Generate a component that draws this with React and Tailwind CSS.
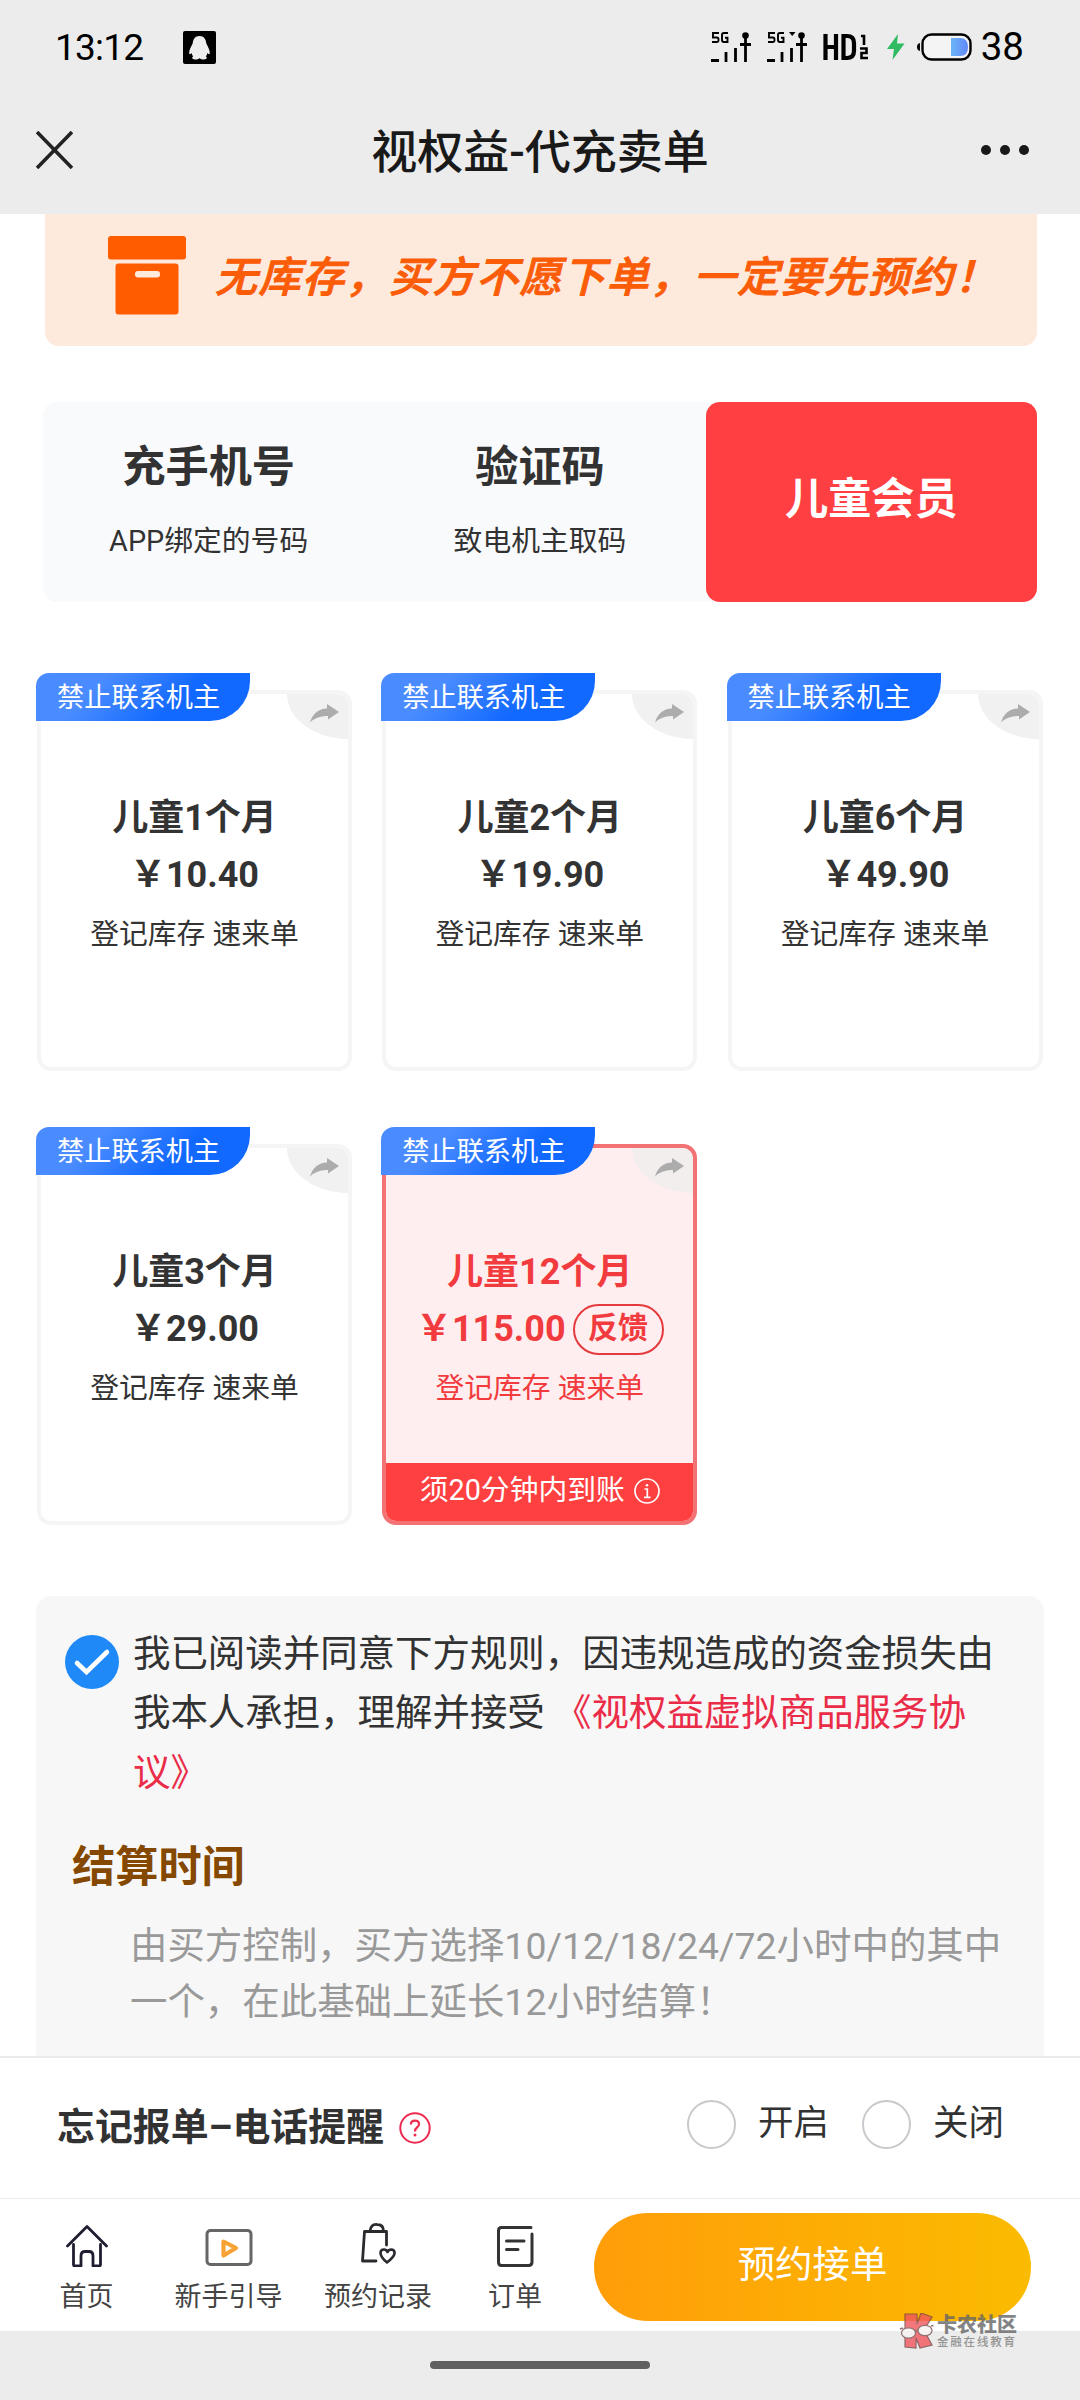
const FONT = "font-[Roboto,'Noto_Sans_CJK_SC',sans-serif]";

function StatusBar() {
  return (
    <div className="flex h-[94px] items-center pl-[55px] pr-[56px] text-black">
      <span className="text-[37px] leading-none tracking-[-0.8px]">13:12</span>
      <svg className="ml-[40px]" width="33" height="33" viewBox="0 0 33 33">
        <rect width="33" height="33" rx="2" fill="#000" />
        <path d="M16.5 5C12 5 10 8.500 9.800 12C9 14.500 6 18.500 6.200 22.500C7 24 8 22.500 8.600 22C8.800 23.500 9.500 24.700 10.200 25.300C8.500 26.500 9 28.500 12 28.500C14 28.500 15.500 28 16.500 27.200C17.500 28 19 28.500 21 28.500C24 28.500 24.500 26.500 22.800 25.300C23.500 24.700 24.200 23.500 24.400 22C25 22.500 26 24 26.800 22.500C27 18.500 24 14.500 23.200 12C23 8.500 21 5 16.500 5Z" fill="#eee" />
      </svg>
      <div className="ml-auto flex items-center">
        <Signal />
        <div className="w-[16px]" />
        <Signal marker />
        <svg className="ml-[16px]" width="46" height="28" viewBox="0 0 46 28" fill="none" stroke="#000" strokeWidth="4.200">
          <path d="M2.500 1V27M13 1V27M2 14H13M20.500 3H24Q31 3 31 10V18Q31 25 24 25H20.500Z" />
          <path d="M38 3H41V12M37 15.500H43.500V20H38.500V25H45" strokeWidth="2.600" />
        </svg>
        <svg className="ml-[17px]" width="19" height="26" viewBox="0 0 19 26">
          <path d="M12 0L1 15H8L6.500 26L18.500 9.500H11Z" fill="#2fbb62" />
        </svg>
        <svg className="ml-[12px]" width="56" height="28" viewBox="0 0 56 28">
          <defs>
            <linearGradient id="charge" x1="0" x2="1" y1="0" y2="0">
              <stop offset="0" stopColor="#6bb5f8" />
              <stop offset="1" stopColor="#6287f7" />
            </linearGradient>
          </defs>
          <path d="M3 10Q0 10.500 0 14Q0 17.500 3 18Z" />
          <rect x="5.500" y="1.500" width="48" height="25" rx="9" fill="#f4f4f4" stroke="#000" strokeWidth="2.400" />
          <path d="M34 5H43Q51 5 51 14Q51 23 43 23H34Z" fill="url(#charge)" />
        </svg>
        <span className="ml-[8px] text-[38.500px] leading-none">38</span>
      </div>
    </div>
  );
}

function Signal({ marker = false }) {
  return (
    <svg width="40" height="32" viewBox="0 0 40 32" fill="none" stroke="#000" strokeWidth="2.200">
      <path d="M8 2H2V6.500H6Q7.500 6.500 7.500 8.500V9.500Q7.500 11 6 11H1M17 2H13Q11 2 11 4V9Q11 11 13 11H16.500V6.800H14" strokeWidth="1.900" />
      <path d="M0 29.500H8M15 21V31M24.500 17V31M34.500 5V31M29 13.500H40" strokeWidth="2.800" />
      <circle cx="34.500" cy="4.500" r="3.300" fill="#000" stroke="none" />
      {marker && <path d="M22 1H28.500L25.200 5Z" fill="#000" stroke="none" />}
    </svg>
  );
}

function Header() {
  return (
    <div className="relative flex h-[120px] items-center justify-between pl-[36px] pr-[51px]">
      <svg className="-mt-[9px]" width="37" height="38" viewBox="0 0 37 38" fill="none" stroke="#222" strokeWidth="3.600">
        <path d="M1 1L36 37M36 1L1 37" />
      </svg>
      <h1 className="absolute inset-x-0 top-[25px] text-center text-[46px] font-medium leading-[66px] text-[#191919]">
        视权益-代充卖单
      </h1>
      <div className="-mt-[9px] flex gap-[9px]">
        <i className="size-[10px] rounded-full bg-[#191919]" />
        <i className="size-[10px] rounded-full bg-[#191919]" />
        <i className="size-[10px] rounded-full bg-[#191919]" />
      </div>
    </div>
  );
}

function Banner() {
  return (
    <div className="ml-[45px] mr-[43px] flex h-[132px] items-center rounded-b-[14px] bg-[#fee9dd] pl-[63px]">
      <svg className="-mt-[9px] shrink-0" width="78" height="79" viewBox="0 0 78 79">
        <rect width="78" height="23.500" rx="3" fill="#ff5c00" />
        <rect x="7.500" y="27.500" width="63" height="51" rx="3" fill="#ff5c00" />
        <rect x="27" y="35" width="25" height="6.500" rx="3" fill="#fee9dd" />
      </svg>
      <span className="-mt-[5px] ml-[29px] whitespace-nowrap text-[42px] font-medium italic leading-none tracking-[1.500px] text-[#fb5c08] [-webkit-text-stroke:1px_#fb5c08]">
        无库存，买方不愿下单，一定要先预约！
      </span>
    </div>
  );
}

function Tabs() {
  return (
    <div className="ml-[43px] mr-[43px] mt-[56px] grid h-[200px] grid-cols-3 rounded-[14px] bg-[#f9fafc] text-center text-[#323233]">
      <div className="pt-[33px]">
        <div className="text-[43.200px] font-bold leading-[66px]">充手机号</div>
        <div className="mt-[18px] text-[28.800px] leading-[44px]">APP绑定的号码</div>
      </div>
      <div className="pt-[33px]">
        <div className="text-[43.200px] font-bold leading-[66px]">验证码</div>
        <div className="mt-[18px] text-[28.800px] leading-[44px]">致电机主取码</div>
      </div>
      <div className="flex items-center justify-center rounded-[14px] bg-[#ff3f41] pb-[3px] text-[43.200px] font-bold text-white">
        儿童会员
      </div>
    </div>
  );
}

function ShareCorner({ selected }) {
  return (
    <div className={`absolute right-0 top-0 h-[45px] w-[61px] rounded-bl-[100%] rounded-tr-[10px] ${selected ? "bg-[#f3eeee]" : "bg-[#f1f1f1]"}`}>
      <svg className="absolute left-[23px] top-[10px]" width="29" height="19" viewBox="0 0 29 19">
        <path d="M17 0L29 8L18 15.500V12Q7 11.500 0 18.500Q4 5 17 4.500Z" fill="#acacac" />
      </svg>
    </div>
  );
}

function Card({ title, price, selected = false }) {
  return (
    <div className="relative h-[398px] pt-[17px]">
      <div
        className={`relative mx-[1px] h-[381px] overflow-hidden rounded-[14px] border-4 text-center ${
          selected ? "border-[#f37375] bg-[#ffeeef] text-[#f23b3e]" : "border-[#f5f5f5] bg-white text-[#333]"
        }`}
      >
        <ShareCorner selected={selected} />
        <div className="mt-[97px] text-[36px] font-bold leading-[54px]">{title}</div>
        <div className="flex h-[60px] items-center justify-center">
          <span className="whitespace-nowrap text-[36px] font-bold leading-[54px]">￥{price}</span>
          {selected && (
            <span className="ml-[7px] h-[51px] w-[91px] shrink-0 rounded-full border-2 border-[#e53a3d] text-[30px] font-bold leading-[44px]">
              反馈
            </span>
          )}
        </div>
        <div className="mt-[6px] text-[28.800px] leading-[46px]">登记库存 速来单</div>
        {selected && (
          <div className="mt-[52px] flex h-[60px] items-center justify-center gap-[9px] bg-[#ff4040] pb-[5px] text-[28.800px] leading-none text-white">
            <span>须20分钟内到账</span>
            <svg width="26" height="26" viewBox="0 0 26 26" fill="none" stroke="#fff" strokeWidth="1.700">
              <circle cx="13" cy="13" r="12" />
              <path d="M10.500 11H13.300V19M10 19.300H16.500" />
              <circle cx="13" cy="7.300" r="1.300" fill="#fff" stroke="none" />
            </svg>
          </div>
        )}
      </div>
      <div className="absolute left-0 top-0 h-[48px] w-[214px] rounded-br-[40px] rounded-tl-[13px] bg-linear-[135deg,#4a8cff_0%,#4a8cff_28%,#1269ff_65%] pl-[21px] text-[27.200px] leading-[50px] text-white">
        禁止联系机主
      </div>
    </div>
  );
}

const CARDS = [
  { title: "儿童1个月", price: "10.40" },
  { title: "儿童2个月", price: "19.90" },
  { title: "儿童6个月", price: "49.90" },
  { title: "儿童3个月", price: "29.00" },
  { title: "儿童12个月", price: "115.00", selected: true },
];

function Rules() {
  return (
    <div className="mx-[36px] mt-[71px] h-[460px] rounded-t-[16px] bg-[#f7f7f7]">
      <div className="flex pl-[29px] pt-[29px]">
        <svg className="mt-[10px] shrink-0" width="54" height="54" viewBox="0 0 54 54">
          <circle cx="27" cy="27" r="27" fill="#1f89f8" />
          <path d="M12 28L21.500 37L42 17" fill="none" stroke="#fff" strokeWidth="4.600" strokeLinecap="round" />
        </svg>
        <p className="ml-[14px] whitespace-nowrap text-[37.450px] leading-[59.300px] text-[#323233]">
          我已阅读并同意下方规则，因违规造成的资金损失由
          <br />
          我本人承担，理解并接受 <span className="text-[#ea2c48]">《视权益虚拟商品服务协</span>
          <br />
          <span className="text-[#ea2c48]">议》</span>
        </p>
      </div>
      <h2 className="ml-[36px] mt-[32px] text-[43.200px] font-bold leading-[66px] text-[#854800]">结算时间</h2>
      <p className="ml-[94px] mt-[17px] whitespace-nowrap text-[37.450px] leading-[56px] text-[#999]">
        由买方控制，买方选择10/12/18/24/72小时中的其中
        <br />
        一个，在此基础上延长12小时结算！
      </p>
    </div>
  );
}

function Reminder() {
  return (
    <div className="flex h-[142px] items-center border-t-2 border-[#ebebeb] bg-white pl-[57px] pr-[76px] text-[#323233]">
      <span className="-mt-[3px] text-[37.900px] font-bold leading-[56px]">忘记报单–电话提醒</span>
      <svg className="ml-[15px]" width="32" height="32" viewBox="0 0 32 32" fill="none" stroke="#ee2a50" strokeWidth="2">
        <circle cx="16" cy="16" r="14.700" />
        <path d="M11.800 12.500Q12 8.600 16 8.600Q20 8.600 20 12Q20 14 18 15.500Q16 17 16 19.500" strokeWidth="2.200" />
        <circle cx="16" cy="23" r="1.500" fill="#ee2a50" stroke="none" />
      </svg>
      <div className="-mt-[7px] ml-auto flex items-center text-[35.500px] leading-[54px]">
        <i className="size-[49px] rounded-full border-2 border-[#c8c9cc]" />
        <span className="-mt-[3px] ml-[22px]">开启</span>
        <i className="ml-[33px] size-[49px] rounded-full border-2 border-[#c8c9cc]" />
        <span className="-mt-[3px] ml-[22px]">关闭</span>
      </div>
    </div>
  );
}

function NavItem({ label, className, children }) {
  return (
    <div className={`flex shrink-0 flex-col items-center pt-[24px] ${className}`}>
      <svg width="48" height="44" viewBox="0 0 48 44" fill="none" stroke="#2b2b2f" strokeWidth="3" strokeLinecap="round" strokeLinejoin="round">
        {children}
      </svg>
      <span className="mt-[10px] whitespace-nowrap text-[27px] leading-[40px] text-[#444]">{label}</span>
    </div>
  );
}

function Nav() {
  return (
    <div className="relative flex h-[133px] border-t border-[#ebebeb] bg-white pl-[26px]">
      <NavItem label="首页" className="w-[121px]">
        <path d="M4.500 23L24 3.500L43.500 23M10.500 21.500V41.500Q10.500 43 12 43H18V33Q18 28.500 22 28.500H26Q30 28.500 30 33V43H36Q37.500 43 37.500 41.500V21.500" stroke="#1e1e30" strokeWidth="2.800" />
      </NavItem>
      <NavItem label="新手引导" className="w-[163px]">
        <rect x="2" y="7.500" width="44" height="34" rx="3.500" stroke="#666" />
        <path d="M18.500 18.500L31 25L18.500 32.500Z" stroke="#f7a234" strokeWidth="4.200" />
      </NavItem>
      <NavItem label="预约记录" className="w-[136px]">
        <path d="M22 38H8.500L10.500 8.500H32.500V22M16 8Q17 1 23 1.500Q29.500 1.500 29.500 8" strokeWidth="2.800" />
        <path d="M33 39.500Q26.500 34 26.500 30Q26.500 26.500 30 26.500Q32.500 26.500 33.500 29Q34.500 26.500 37.500 26.500Q41 27 40.500 30.500Q40 34 33 39.500Z" strokeWidth="2.600" />
      </NavItem>
      <NavItem label="订单" className="w-[138px]">
        <path d="M40 4.500H10.500Q7.500 4.500 7.500 7.500V39Q7.500 42.500 10.500 42.500H37.500Q41 42.500 41 39V11M15.500 18H33M15.500 26.500H27" stroke="#333" />
      </NavItem>
      <button className="ml-[10px] mt-[14px] h-[108px] w-[437px] rounded-full bg-linear-to-r from-[#ff9d09] to-[#fbbb00] pb-[4px] text-[37.400px] text-white">
        预约接单
      </button>
      <Watermark />
    </div>
  );
}

function Watermark() {
  return (
    <div className="absolute left-[899px] top-[114px] z-10 flex items-start opacity-80">
      <svg width="36" height="36" viewBox="0 0 36 36">
        <path d="M6 1H18V11L22 0L33 4L25 17L33 32L21 35L17 25V35L6 34Z" fill="#f0555c" stroke="#7a4444" strokeWidth="1.200" />
        <path d="M1 16L4 15M15 19L19 17M32 13L34.500 12.500" stroke="#7a5050" strokeWidth="1.600" />
        <ellipse cx="9.500" cy="20" rx="7" ry="5.200" fill="#f7f2f2" stroke="#7a5050" strokeWidth="1.200" />
        <ellipse cx="26" cy="17.500" rx="7" ry="5.200" fill="#f7f2f2" stroke="#7a5050" strokeWidth="1.200" />
      </svg>
      <div className="ml-[2px] whitespace-nowrap text-[#666]">
        <div className="text-[20px] font-black leading-[24px]">卡农社区</div>
        <div className="text-[11.500px] font-medium leading-[11px] tracking-[1.800px] text-[#7d7d7d]">金融在线教育</div>
      </div>
    </div>
  );
}

export default function App() {
  return (
    <div className={`flex h-[2400px] w-[1080px] flex-col overflow-hidden bg-white ${FONT}`} lang="zh-CN">
      <div className="bg-[#ececec]">
        <StatusBar />
        <Header />
      </div>
      <Banner />
      <Tabs />
      <div className="ml-[36px] mt-[71px] grid grid-cols-[317px_317px_317px] gap-x-[28.250px] gap-y-[56px]">
        {CARDS.map((c) => (
          <Card key={c.title} {...c} />
        ))}
      </div>
      <Rules />
      <Reminder />
      <Nav />
      <div className="flex h-[69px] justify-center bg-[#ececec] pt-[30px]">
        <div className="h-[8px] w-[220px] rounded-full bg-[#606060]" />
      </div>
    </div>
  );
}
